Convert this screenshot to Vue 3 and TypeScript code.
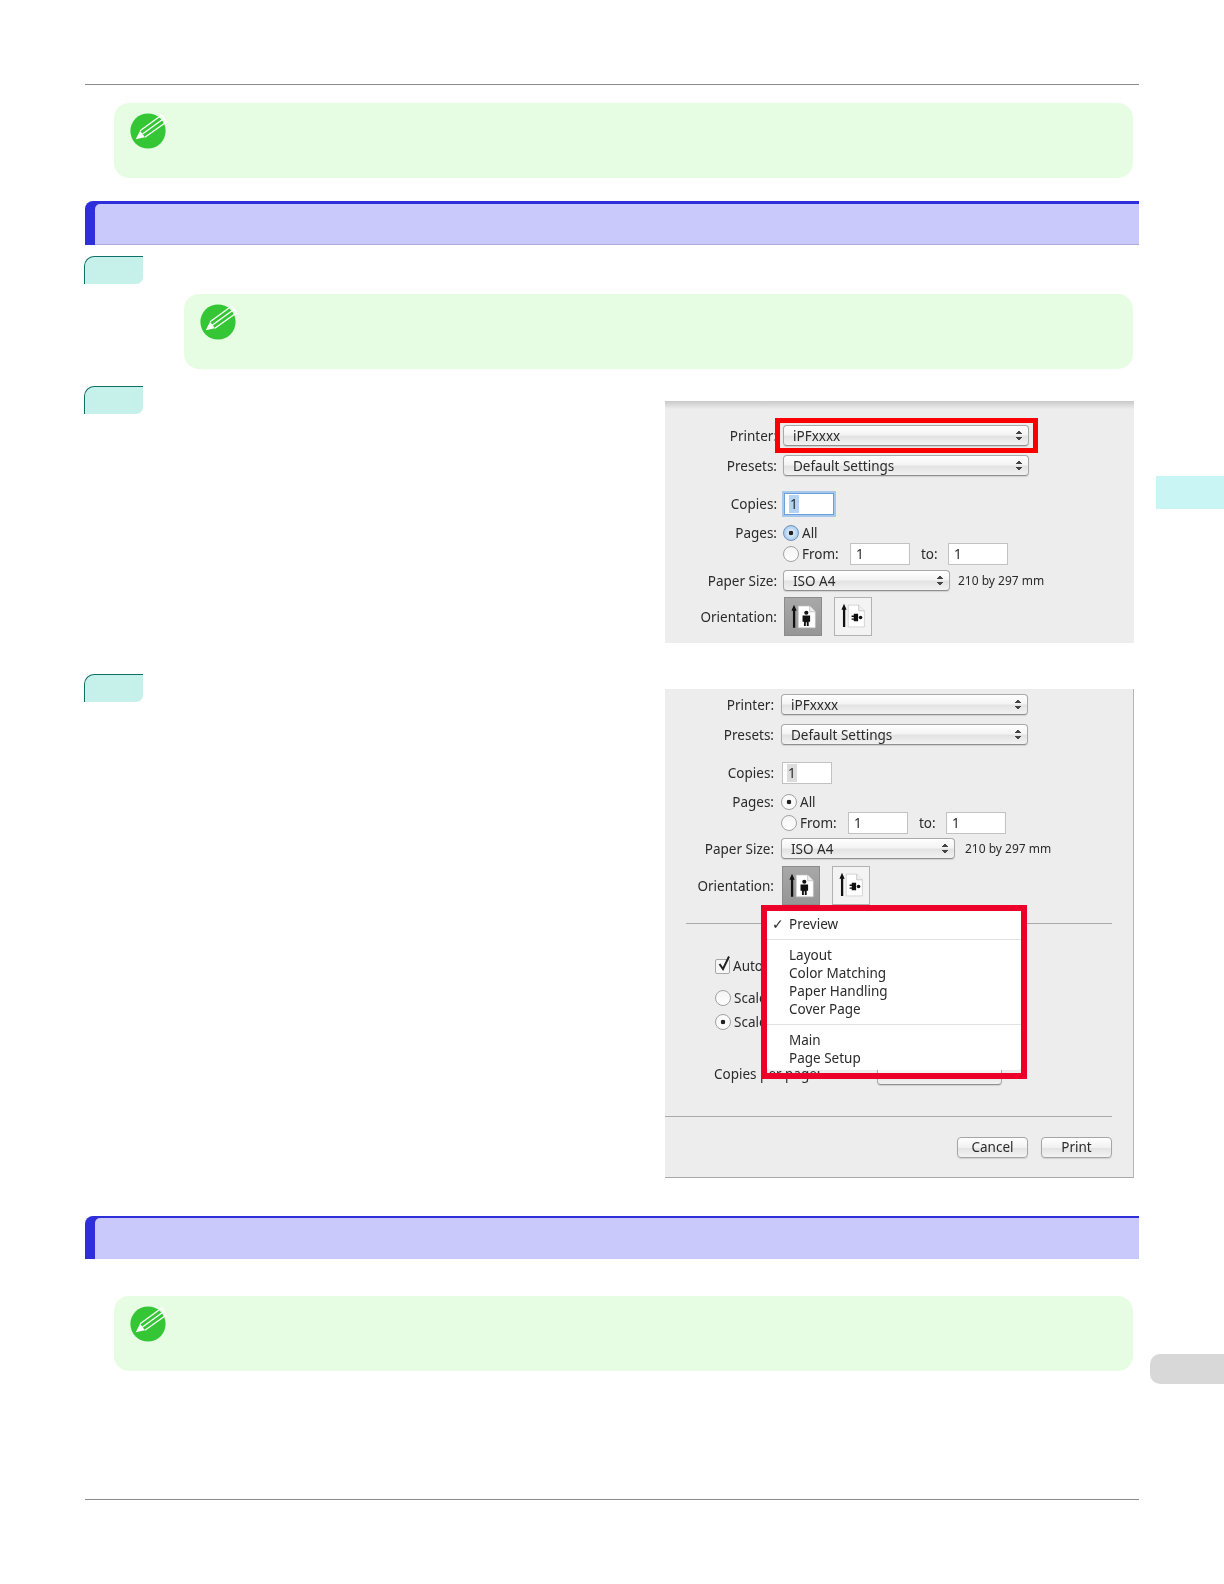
<script setup lang="ts">
interface PrintDialog {
  id: string
  expanded: boolean
}
const dialogs: PrintDialog[] = [
  { id: 'first', expanded: false },
  { id: 'second', expanded: true },
]
const menuGroups: string[][] = [
  ['Layout', 'Color Matching', 'Paper Handling', 'Cover Page'],
  ['Main', 'Page Setup'],
]
</script>

<template>
  <div class="page">
    <div class="rule"></div>

    <div class="note note-wide">
      <svg class="pencil" viewBox="0 0 38 38" aria-hidden="true">
        <circle cx="18" cy="18" r="17.6" fill="#35c635" />
        <path d="M5.7 26.3 10.1 17.7 14.9 24.3Z" fill="#fff" />
        <path d="M10.1 17.7 31.7 2M12.5 21 34.2 5.3M14.9 24.3 36.7 8.7M31.7 2 36.7 8.7" stroke="#fff" stroke-width="1.3" fill="none" />
      </svg>
    </div>

    <div class="heading heading-first"><div class="heading-fill"></div></div>

    <div class="tab tab-first"></div>
    <div class="note note-step">
      <svg class="pencil" viewBox="0 0 38 38" aria-hidden="true">
        <circle cx="18" cy="18" r="17.6" fill="#35c635" />
        <path d="M5.7 26.3 10.1 17.7 14.9 24.3Z" fill="#fff" />
        <path d="M10.1 17.7 31.7 2M12.5 21 34.2 5.3M14.9 24.3 36.7 8.7M31.7 2 36.7 8.7" stroke="#fff" stroke-width="1.3" fill="none" />
      </svg>
    </div>

    <div v-for="d in dialogs" :key="d.id" class="step" :class="'step-' + d.id">
      <div class="tab"></div>
      <div class="dlg" :class="'dlg-' + d.id">
        <div class="row row-printer">
          <span class="label">Printer:</span>
          <div class="select select-long"><span>iPFxxxx</span><i class="updown"></i></div>
        </div>
        <div class="row row-presets">
          <span class="label">Presets:</span>
          <div class="select select-long"><span>Default Settings</span><i class="updown"></i></div>
        </div>
        <div class="row row-copies">
          <span class="label">Copies:</span>
          <div class="input input-copies"><b class="sel">1</b></div>
        </div>
        <div class="row row-all">
          <span class="label">Pages:</span>
          <i class="radio radio-on"></i><span class="radio-text">All</span>
        </div>
        <div class="row row-from">
          <span class="label"></span>
          <i class="radio"></i><span class="radio-text">From:</span>
          <div class="input input-page"><span>1</span></div>
          <span class="to">to:</span>
          <div class="input input-page"><span>1</span></div>
        </div>
        <div class="row row-paper">
          <span class="label">Paper Size:</span>
          <div class="select select-paper"><span>ISO A4</span><i class="updown"></i></div>
          <span class="paper-dim">210 by 297 mm</span>
        </div>
        <div class="row row-orient">
          <span class="label">Orientation:</span>
          <div class="orient orient-on">
            <svg viewBox="0 0 38 38" aria-hidden="true">
              <path d="M9.5 6.5 12.3 13H10.8V31H8.4V13H6.8Z" fill="#111" />
              <path d="M14 8H26L32 14V31H14Z" fill="#fff" stroke="#c4c4c4" stroke-width=".7" />
              <path d="M26 8V14H32" fill="#eee" stroke="#b5b5b5" stroke-width=".7" />
              <circle cx="22.5" cy="15" r="2.2" fill="#111" />
              <path d="M18.5 18H26.5V24.5H25V29H23V25H22V29H20V24.5H18.5Z" fill="#111" />
            </svg>
          </div>
          <div class="orient">
            <svg viewBox="0 0 38 38" aria-hidden="true">
              <path d="M9.5 5.5 12.3 12H10.8V30H8.4V12H6.8Z" fill="#111" />
              <path d="M14 7H25L31 13V30H14Z" fill="#fff" stroke="#c4c4c4" stroke-width=".7" />
              <path d="M25 7V13H31" fill="#eee" stroke="#b5b5b5" stroke-width=".7" />
              <circle cx="27" cy="20" r="1.9" fill="#111" />
              <path d="M24.4 16V24H19.8V22.5H17.5V21H19.8V19.5H17.5V18H19.8V16Z" fill="#111" />
            </svg>
          </div>
        </div>

        <template v-if="d.expanded">
          <div class="hr hr-options"></div>
          <div class="opt opt-auto">
            <i class="check"><svg viewBox="0 0 16 18" aria-hidden="true"><path d="M3.5 9 7 14 13 1.5" fill="none" stroke="#222" stroke-width="2" /></svg></i>
            <span>Auto</span>
          </div>
          <div class="opt opt-scale"><i class="radio"></i><span>Scale</span></div>
          <div class="opt opt-fit"><i class="radio radio-dark"></i><span>Scale</span></div>
          <div class="opt opt-per">
            <span>Copies per page:</span>
            <div class="select select-per"></div>
          </div>
          <div class="hr hr-actions"></div>
          <div class="actions">
            <div class="btn">Cancel</div>
            <div class="btn">Print</div>
          </div>

          <div class="menu-mark">
            <div class="menu">
              <div class="menu-item menu-top"><span class="tick">✓</span>Preview</div>
              <template v-for="(group, g) in menuGroups" :key="g">
                <div class="menu-sep"></div>
                <div v-for="item in group" :key="item" class="menu-item">{{ item }}</div>
              </template>
            </div>
          </div>
        </template>
        <div v-else class="printer-mark"></div>
      </div>
    </div>

    <div class="heading heading-second"><div class="heading-fill"></div></div>

    <div class="note note-wide note-last">
      <svg class="pencil" viewBox="0 0 38 38" aria-hidden="true">
        <circle cx="18" cy="18" r="17.6" fill="#35c635" />
        <path d="M5.7 26.3 10.1 17.7 14.9 24.3Z" fill="#fff" />
        <path d="M10.1 17.7 31.7 2M12.5 21 34.2 5.3M14.9 24.3 36.7 8.7M31.7 2 36.7 8.7" stroke="#fff" stroke-width="1.3" fill="none" />
      </svg>
    </div>

    <div class="rule rule-bottom"></div>

    <div class="thumb thumb-cyan"></div>
    <div class="thumb thumb-gray"></div>
  </div>
</template>

<style>
html,
body {
  margin: 0;
  background: #fff;
}
</style>

<style scoped>
.page {
  position: relative;
  box-sizing: border-box;
  width: 1224px;
  height: 1584px;
  padding: 84px 85px 0;
  background: #fff;
  font-family: "Noto Sans", "DejaVu Sans", sans-serif;
  font-size: 13.5px;
  color: #2b2b2b;
  overflow: hidden;
}
.rule {
  height: 1px;
  background: #8a8a8a;
}
.rule-bottom {
  margin-top: 128px;
}
.note {
  box-sizing: border-box;
  height: 75px;
  padding: 10px 16px;
  border-radius: 15px;
  background: #e7fde3;
}
.note-wide {
  margin: 18px 6px 0 29px;
}
.note-step {
  margin: 10px 6px 0 99px;
}
.note-last {
  margin-top: 37px;
}
.pencil {
  display: block;
  width: 38px;
  height: 38px;
}
.heading {
  box-sizing: border-box;
  height: 43px;
  margin-top: 23px;
  padding: 3px 0 0 10px;
  border-radius: 8px 0 0 0;
  background: #2e2edb;
}
.heading-first {
  height: 44px;
}
.heading-second {
  margin-top: 38px;
  padding-top: 2px;
}
.heading-fill {
  height: 100%;
  box-sizing: border-box;
  border-radius: 5px 0 0 0;
  background: #c9c9fb;
}
.heading-first .heading-fill {
  border-bottom: 1px solid #aeaadf;
}
.tab {
  box-sizing: border-box;
  width: 59px;
  height: 28px;
  margin-left: -1px;
  border-top: 1px solid #0f6f69;
  border-left: 1px solid #0f6f69;
  border-radius: 10px 0 7px 0;
  background: #c6f0ea;
  flex: none;
}
.tab-first {
  margin-top: 11px;
}
.step {
  display: flex;
  justify-content: space-between;
  align-items: flex-start;
}
.step-first {
  margin-top: 17px;
}
.step-second {
  margin-top: 31px;
}
.dlg {
  position: relative;
  box-sizing: border-box;
  width: 469px;
  margin-right: 5px;
  background: #ededed;
  filter: blur(0.35px);
}
.dlg-first {
  height: 242px;
  margin-top: 15px;
  padding-top: 24px;
  background: linear-gradient(#c9c9c9, #ededed 8px);
}
.dlg-second {
  height: 489px;
  margin-top: 15px;
  padding-top: 5px;
  border-right: 1px solid #b5b5b5;
  border-bottom: 1px solid #a8a8a8;
}
.row {
  display: flex;
  align-items: center;
  height: 21px;
}
.row-presets {
  margin-top: 9px;
}
.row-copies {
  height: 23px;
  margin-top: 16px;
}
.row-all {
  height: 20px;
  margin-top: 8px;
}
.row-from {
  height: 22px;
  margin-top: 0;
}
.row-paper {
  margin-top: 5px;
}
.dlg-second .row-paper {
  margin-top: 4px;
}
.row-orient {
  height: 39px;
  margin-top: 6px;
}
.dlg-second .row-orient {
  margin-top: 7px;
}
.label {
  width: 112px;
  margin-right: 6px;
  text-align: right;
  white-space: nowrap;
  flex: none;
}
.dlg-second .label {
  width: 109px;
  margin-right: 7px;
}
.select {
  position: relative;
  box-sizing: border-box;
  display: flex;
  align-items: center;
  height: 21px;
  padding-left: 9px;
  border: 1px solid #a9a9a9;
  border-bottom-color: #8f8f8f;
  border-radius: 4px;
  background: linear-gradient(#fff, #f4f4f4 45%, #e3e3e3 55%, #f2f2f2);
  box-shadow: 0 1px 1px rgba(0, 0, 0, 0.12);
}
.select-long {
  width: 246px;
}
.dlg-second .select-long {
  width: 247px;
}
.select-paper {
  width: 167px;
}
.dlg-second .select-paper {
  width: 174px;
}
.select-per {
  width: 125px;
  margin-left: auto;
}
.updown {
  position: absolute;
  right: 6px;
  top: 4px;
  width: 6px;
  height: 11px;
  background:
    linear-gradient(to bottom right, transparent 50%, #444 51%) left top / 50% 4px no-repeat,
    linear-gradient(to bottom left, transparent 50%, #444 51%) right top / 50% 4px no-repeat,
    linear-gradient(to top right, transparent 50%, #444 51%) left bottom / 50% 4px no-repeat,
    linear-gradient(to top left, transparent 50%, #444 51%) right bottom / 50% 4px no-repeat;
}
.input {
  box-sizing: border-box;
  display: flex;
  align-items: center;
  height: 22px;
  padding-left: 4px;
  border: 1px solid #c2c2c2;
  background: #fff;
}
.input-copies {
  width: 50px;
  margin-left: 1px;
}
.dlg-first .input-copies {
  border: 1px solid #6f9fd8;
  box-shadow: 0 0 0 2px #a6c8ec;
}
.sel {
  padding: 0 1px;
  font-weight: 400;
  background: #dcdcdc;
}
.dlg-first .sel {
  background: #b6d3f3;
}
.input-page {
  width: 60px;
  padding-left: 5px;
}
.radio {
  box-sizing: border-box;
  display: block;
  width: 16px;
  height: 16px;
  border: 1px solid #a2a2a2;
  border-radius: 50%;
  background: linear-gradient(#f4f4f4, #fff);
  flex: none;
}
.radio-on {
  background: radial-gradient(circle, #222 0 2px, #d8e8f8 2.6px, #8cb9e6 100%);
  border-color: #6d94bd;
}
.dlg-second .radio-on,
.radio-dark {
  background: radial-gradient(circle, #222 0 2px, #fafafa 2.6px);
  border-color: #a2a2a2;
}
.radio-text {
  margin-left: 3px;
}
.row-from .radio-text {
  width: 48px;
}
.to {
  width: 38px;
  padding-left: 11px;
  box-sizing: border-box;
}
.paper-dim {
  margin-left: 8px;
  font-size: 12px;
}
.dlg-second .paper-dim {
  margin-left: 10px;
}
.orient {
  box-sizing: border-box;
  width: 38px;
  height: 39px;
  margin-right: 12px;
  border: 1px solid #b2b2b2;
  background: #f3f3f3;
  flex: none;
}
.orient-on {
  margin-left: 1px;
  background: linear-gradient(#a8a8a8, #969696);
  border-color: #8c8c8c;
}
.orient svg {
  display: block;
  width: 36px;
  height: 37px;
}
.hr {
  height: 1px;
  background: #a9a9a9;
}
.hr-options {
  width: 426px;
  margin: 18px 0 0 21px;
}
.opt {
  display: flex;
  align-items: center;
  height: 20px;
  margin-left: 50px;
  white-space: nowrap;
}
.opt span {
  margin-left: 3px;
}
.opt-auto {
  margin-top: 32px;
}
.opt-scale {
  margin-top: 12px;
}
.opt-fit {
  margin-top: 4px;
}
.opt-per {
  width: 288px;
  margin: 32px 0 0 49px;
}
.opt-per span {
  margin-left: 0;
}
.check {
  box-sizing: border-box;
  display: block;
  width: 15px;
  height: 15px;
  border: 1px solid #a8a8a8;
  border-radius: 2px;
  background: #f7f7f7;
}
.check svg {
  display: block;
  width: 16px;
  height: 18px;
  margin-top: -5px;
}
.hr-actions {
  width: 447px;
  margin-top: 32px;
}
.actions {
  display: flex;
  justify-content: flex-end;
  gap: 13px;
  width: 447px;
  margin-top: 20px;
}
.btn {
  box-sizing: border-box;
  width: 71px;
  height: 21px;
  border: 1px solid #a5a5a5;
  border-radius: 4px;
  background: linear-gradient(#fff, #f1f1f1 50%, #e4e4e4 55%, #f3f3f3);
  box-shadow: 0 1px 1px rgba(0, 0, 0, 0.12);
  text-align: center;
  line-height: 19px;
}
.printer-mark {
  position: absolute;
  left: 110px;
  top: 17px;
  box-sizing: border-box;
  width: 263px;
  height: 35px;
  border: 5px solid #fb0000;
}
.menu-mark {
  position: absolute;
  left: 96px;
  top: 216px;
  box-sizing: border-box;
  width: 266px;
  height: 174px;
  border: 6px solid #ec0029;
}
.menu {
  height: 159px;
  box-sizing: border-box;
  padding-top: 4px;
  border-radius: 0 0 4px 4px;
  background: #fff;
}
.menu-item {
  position: relative;
  height: 18px;
  padding-left: 22px;
  line-height: 18px;
  white-space: nowrap;
}
.menu-sep {
  height: 1px;
  margin: 6px 0;
  background: #e2e2e2;
}
.tick {
  position: absolute;
  left: 5px;
  top: 0;
  font-family: "DejaVu Sans", sans-serif;
  font-size: 14px;
  font-weight: 700;
}
.thumb {
  position: absolute;
  right: 0;
}
.thumb-cyan {
  top: 476px;
  width: 68px;
  height: 33px;
  background: #c9f5f5;
}
.thumb-gray {
  top: 1354px;
  width: 74px;
  height: 30px;
  border-radius: 10px 0 0 10px;
  background: #d8d8d8;
}
</style>
